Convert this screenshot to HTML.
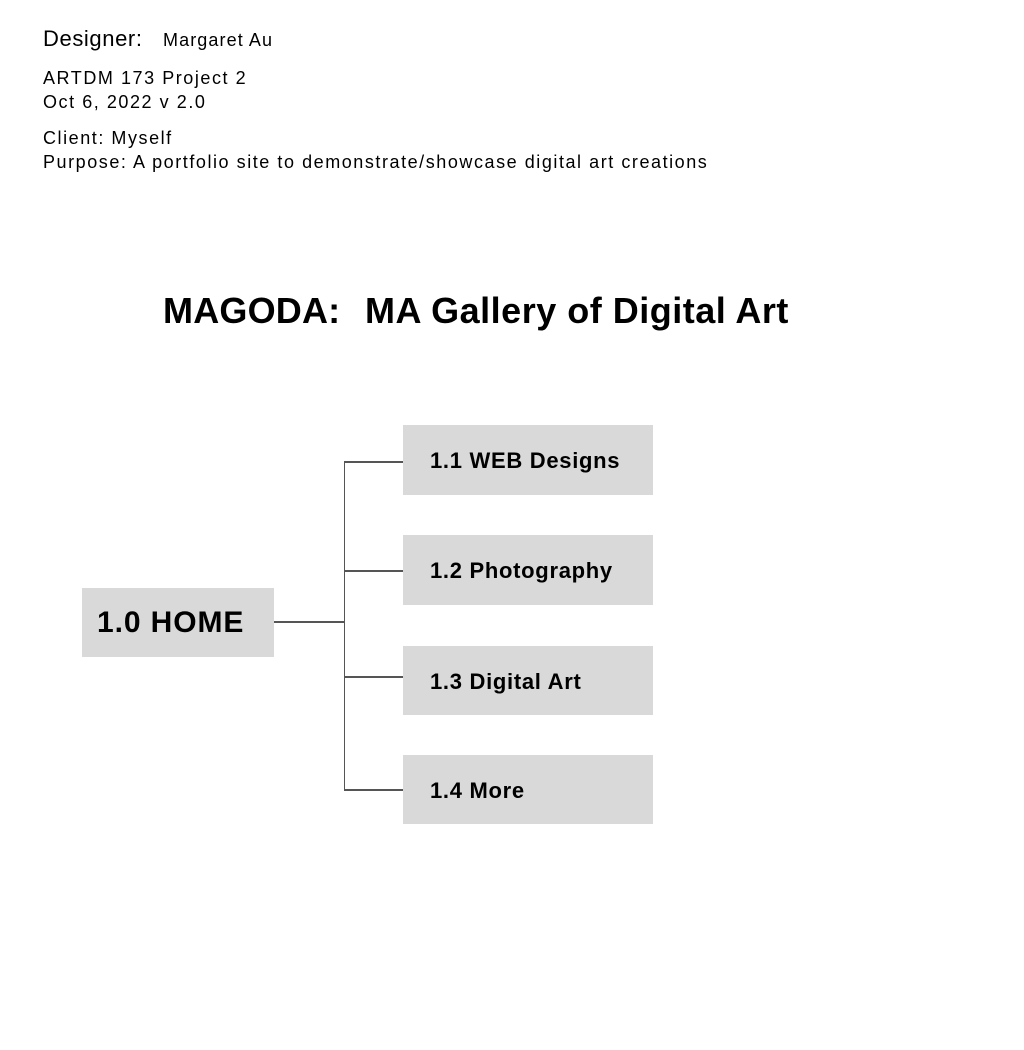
<!DOCTYPE html>
<html><head><style>
body{margin:0;width:1024px;height:1050px;background:#fff;font-family:"Liberation Sans",sans-serif;color:#000;position:relative;overflow:hidden}
.t{position:absolute;white-space:nowrap}
.s{font-size:18px;letter-spacing:1.55px}
.b{position:absolute;background:#d9d9d9;font-weight:bold;box-sizing:border-box}
.c{left:403px;width:250px;height:70px;font-size:22px;line-height:72px;padding-left:27px;letter-spacing:0.7px}
.l{position:absolute;background:#555}
</style></head><body>
<div class="t" style="left:43px;top:26px;font-size:22px;letter-spacing:0.6px">Designer:</div>
<div class="t" style="left:163px;top:30px;font-size:18px;letter-spacing:1.1px">Margaret Au</div>
<div class="t s" style="left:43px;top:66px;line-height:24px">ARTDM 173 Project 2<br>Oct 6, 2022 v 2.0</div>
<div class="t s" style="left:43px;top:126px;line-height:24px">Client: Myself<br>Purpose: A portfolio site to demonstrate/showcase digital art creations</div>
<div class="t" style="left:163px;top:290px;font-size:36px;font-weight:bold;letter-spacing:0.2px">MAGODA:</div>
<div class="t" style="left:365px;top:290px;font-size:36px;font-weight:bold;letter-spacing:0.5px">MA Gallery of Digital Art</div>
<div class="b" style="left:82px;top:588px;width:192px;height:69px;font-size:30px;line-height:70px;padding-left:15px;letter-spacing:0.9px">1.0 HOME</div>
<div class="b c" style="top:425px">1.1 WEB Designs</div>
<div class="b c" style="top:535px">1.2 Photography</div>
<div class="b c" style="top:646px;height:69px;line-height:71px">1.3 Digital Art</div>
<div class="b c" style="top:755px;height:69px;line-height:71px">1.4 More</div>
<div class="l" style="left:274px;top:621px;width:71px;height:1.5px"></div>
<div class="l" style="left:343.5px;top:461px;width:1.5px;height:329px"></div>
<div class="l" style="left:344px;top:461px;width:59px;height:1.5px"></div>
<div class="l" style="left:344px;top:570px;width:59px;height:1.5px"></div>
<div class="l" style="left:344px;top:676px;width:59px;height:1.5px"></div>
<div class="l" style="left:344px;top:789px;width:59px;height:1.5px"></div>
</body></html>
